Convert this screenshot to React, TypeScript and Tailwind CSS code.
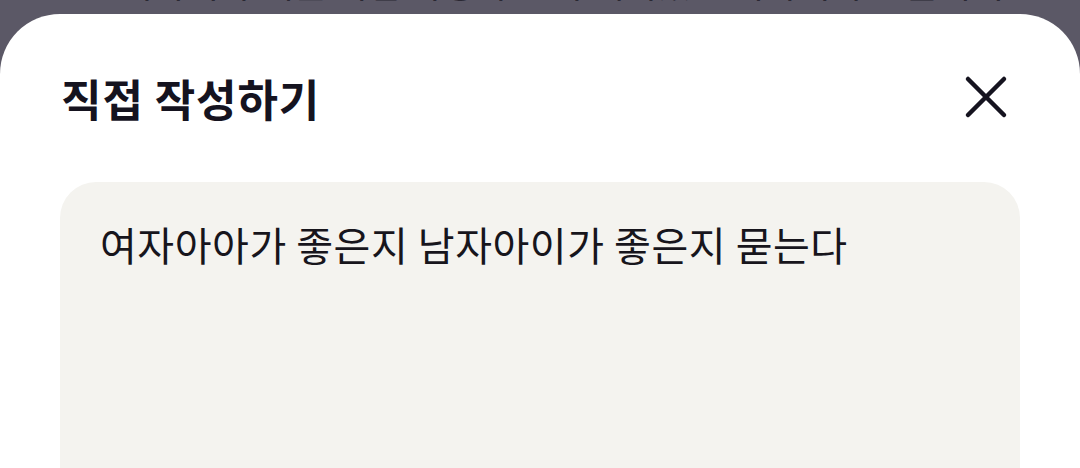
import React from "react";

export default function App() {
  return (
    <div
      className="relative h-[468px] w-[1080px] overflow-hidden bg-[#5b5866]"
      style={{ fontFamily: '"Noto Sans CJK KR", "Noto Sans", sans-serif' }}
    >
      <div className="pointer-events-none absolute left-[120px] top-[-36px] whitespace-nowrap text-[36px] leading-[36px] text-[#2a2833]">
        이야기 주제를 직접 작성하면 더 재미있는 이야기가 만들어져요
      </div>
      <div className="relative mt-[14px] flex h-[454px] flex-col rounded-t-[60px] bg-white">
        <div className="flex items-center justify-between pl-[61px] pr-[72px] pt-[58px]">
          <h1 className="text-[44px] font-bold leading-[52px] tracking-[0.9px] text-[#15131f]">
            직접 작성하기
          </h1>
          <svg width="44" height="44" viewBox="0 0 44 44" fill="none" className="mt-[-2px]">
            <path
              d="M4 4L40 40M40 4L4 40"
              stroke="#15131f"
              strokeWidth="4.5"
              strokeLinecap="round"
            />
          </svg>
        </div>
        <div className="mx-[60px] mt-[58px] flex-1 rounded-t-[36px] bg-[#f4f3ef] px-[40px] pt-[36px]">
          <p className="text-[40px] leading-[52px] tracking-[0.55px] text-[#17151c]">
            여자아아가 좋은지 남자아이가 좋은지 묻는다
          </p>
        </div>
      </div>
    </div>
  );
}
